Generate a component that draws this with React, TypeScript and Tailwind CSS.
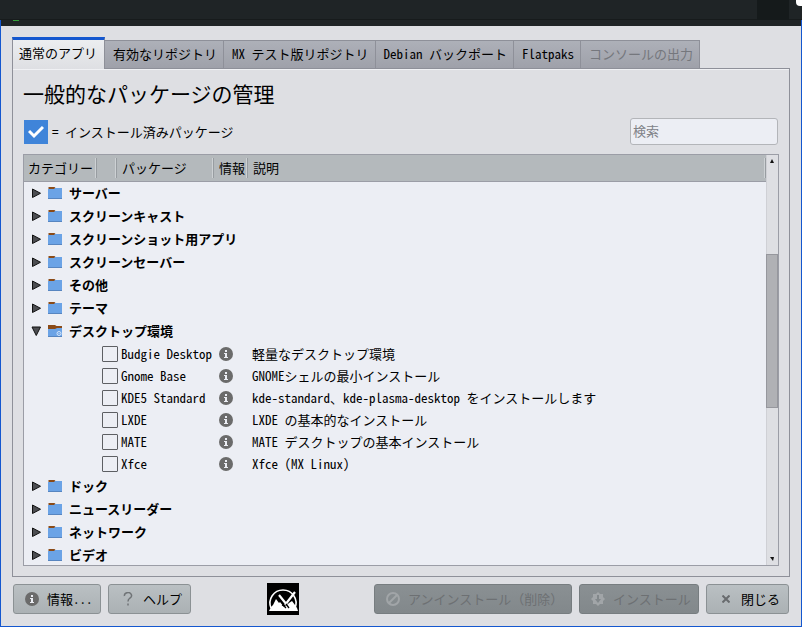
import clsx from 'clsx'

const tabs = [
  { label: '通常のアプリ', active: true },
  { label: '有効なリポジトリ' },
  { label: 'MX テスト版リポジトリ' },
  { label: 'Debian バックポート' },
  { label: 'Flatpaks' },
  { label: 'コンソールの出力', disabled: true },
]

const categories = [
  { name: 'サーバー' },
  { name: 'スクリーンキャスト' },
  { name: 'スクリーンショット用アプリ' },
  { name: 'スクリーンセーバー' },
  { name: 'その他' },
  { name: 'テーマ' },
  {
    name: 'デスクトップ環境',
    packages: [
      { name: 'Budgie Desktop', description: '軽量なデスクトップ環境' },
      { name: 'Gnome Base', description: 'GNOMEシェルの最小インストール' },
      { name: 'KDE5 Standard', description: 'kde-standard、kde-plasma-desktop をインストールします' },
      { name: 'LXDE', description: 'LXDE の基本的なインストール' },
      { name: 'MATE', description: 'MATE デスクトップの基本インストール' },
      { name: 'Xfce', description: 'Xfce (MX Linux)' },
    ],
  },
  { name: 'ドック' },
  { name: 'ニュースリーダー' },
  { name: 'ネットワーク' },
  { name: 'ビデオ' },
]

function InfoIcon({ className }: { className?: string }) {
  return (
    <svg viewBox="0 0 14 14" className={clsx('size-3.5 shrink-0', className)}>
      <circle cx="7" cy="7" r="7" fill="#6b6b6b" />
      <path d="M6 3h2v2H6zM5 6h3v4h1v1H5v-1h1V7H5z" fill="#eceef4" />
    </svg>
  )
}

function Arrow({ open }: { open: boolean }) {
  return (
    <svg viewBox="0 0 10 10" className="size-2.5 shrink-0">
      <path
        d={open ? 'M1 1h8.500L5.250 9.500z' : 'M1.500 1v8.500L9.500 5.250z'}
        fill="#4c4d51"
        stroke="#111"
        strokeLinejoin="round"
      />
    </svg>
  )
}

function FolderIcon({ open }: { open: boolean }) {
  return (
    <svg viewBox="0 0 14 12" className="h-3 w-3.5 shrink-0">
      <path d={open ? 'M0 0h7l1.5 1H14v4H0z' : 'M.5 0h6l1 1v3H.5z'} fill="#8a4a17" />
      <path d={open ? 'M0 4h7l2-1h5v9H0z' : 'M0 2h6l1-1h7v11H0z'} fill="#6ba3e6" />
      <path d="M0 11h14v1H0z" fill="#5785c0" />
      {open && <circle cx="11" cy="8.5" r="2" fill="none" stroke="#d5e5fa" />}
      {open && <circle cx="11" cy="8.5" r=".6" fill="#d5e5fa" />}
    </svg>
  )
}

function Logo() {
  return (
    <svg viewBox="0 0 32 32" className="size-8" role="img" aria-label="MX">
      <path d="M0 0h32v32H0z" fill="#000" />
      <path d="M4 25A13 13 0 1 1 28 25" fill="none" stroke="#fff" strokeWidth="1.6" />
      <path d="M2 28l2-4 2-2 3-6 3 4 1-1 4 5 2-1 3-3 3-2 3 4 2 3 1 3z" fill="#fff" />
      <path d="M12 12l8 10M28 9L18 22" fill="none" stroke="#fff" strokeWidth="2.2" />
      <path d="M15 22l2 1 2 2M19 21l3 4" fill="none" stroke="#000" strokeWidth="1.3" />
    </svg>
  )
}

function ColumnHeader({ label, first }: { label?: string; first?: boolean }) {
  return (
    <th className="h-[26px] p-0 py-0.5 font-normal">
      <div
        className={clsx(
          'flex h-5 items-center overflow-hidden border-r border-[#989da1] text-left whitespace-nowrap shadow-[inset_-1px_0_0_#cdd1d4]',
          first ? 'pl-1' : 'pl-[5px]'
        )}
      >
        {label}
      </div>
    </th>
  )
}

const buttonBase = 'flex h-[30px] items-center rounded-[3px] border text-[13px] whitespace-nowrap'
const buttonEnabled = 'border-[#8b9194] bg-linear-to-b from-[#bac0c3] to-[#abb1b4] text-black'
const buttonDisabled = 'border-[#777d80] bg-linear-to-b from-[#8a9093] to-[#82888b] text-[#6d7073]'

export default function App() {
  return (
    <div className="flex min-h-screen flex-col bg-[#1f2426] font-['Noto_Sans_CJK_JP',sans-serif] text-[13px] leading-5 text-black [font-feature-settings:'hwid']">
      <header className="flex h-5 justify-end border-b border-[#171b1c]">
        <div className="mr-[7px] h-5 w-8 bg-[#151a1b]" />
        <div className="h-1.5 w-1.5 rounded-bl-sm bg-white" />
      </header>

      <div className="flex flex-1 flex-col border-x border-b border-[#1457cf]">
        <div className="h-1.5 pl-3">
          <div className="h-px w-1.5 bg-[#35a03a]" />
        </div>

        <main className="flex flex-1 flex-col bg-[#dedfe3] px-[11px] pt-[11px] pb-[11px]">
          <div role="tablist" className="z-10 -mb-px flex items-end">
            {tabs.map((tab) => (
              <button
                key={tab.label}
                role="tab"
                aria-selected={!!tab.active}
                disabled={tab.disabled}
                className={clsx(
                  'border-r whitespace-nowrap',
                  tab.active
                    ? 'h-8 border-t-3 border-l border-[#8e9099] border-t-[#1457cf] bg-linear-to-b from-[#eceef0] to-[#dedfe3] pr-[7px] pb-1 pl-1.5'
                    : 'mb-px h-7 border-t border-[#8e9099] bg-linear-to-b from-[#adb0b8] to-[#9fa1aa] pr-1.5 pb-0.5 pl-2',
                  tab.disabled && 'text-[#75777d]'
                )}
              >
                {tab.label}
              </button>
            ))}
          </div>

          <section className="flex flex-1 flex-col border border-[#8e9099] px-2.5 pt-2 pb-2.5 shadow-[inset_0_1px_0_#f0f1f4]">
            <h1 className="h-8 text-[21px] leading-8">一般的なパッケージの管理</h1>

            <div className="mt-[9px] flex items-center justify-between px-px">
              <div className="flex items-center gap-1">
                <span className="flex size-6 items-center justify-center bg-[#3f84d9]">
                  <svg viewBox="0 0 16 16" className="size-4">
                    <path d="M1 7l5 5 9-9" fill="none" stroke="#fff" strokeWidth="3" />
                  </svg>
                </span>
                <span>= インストール済みパッケージ</span>
              </div>
              <input
                type="search"
                aria-label="検索"
                placeholder="検索"
                className="h-[27px] w-[148px] rounded-[3px] border border-[#b3b5b9] bg-[#eceef4] px-0.5 pb-0.5 placeholder:text-[#808287]"
              />
            </div>

            <div className="mt-[9px] flex h-80 grow border border-[#9b9da6] bg-[#eceef4]">
              <div className="min-w-0 flex-1 overflow-hidden">
                <table className="w-full table-fixed border-collapse">
                  <colgroup>
                    <col className="w-[73px]" />
                    <col className="w-5" />
                    <col className="w-[97px]" />
                    <col className="w-[34px]" />
                    <col />
                  </colgroup>
                  <thead className="border-b border-[#9b9da6] bg-[#b4b9bc]">
                    <tr>
                      <ColumnHeader label="カテゴリー" first />
                      <ColumnHeader />
                      <ColumnHeader label="パッケージ" />
                      <ColumnHeader label="情報" />
                      <ColumnHeader label="説明" />
                    </tr>
                  </thead>
                  {categories.map((category) => (
                    <tbody key={category.name}>
                      <tr className="h-[23px]">
                        <td colSpan={5} className="p-0">
                          <button aria-expanded={!!category.packages} className="flex h-[23px] items-center pl-[7px] font-bold">
                            <Arrow open={!!category.packages} />
                            <span className="ml-[7px] flex">
                              <FolderIcon open={!!category.packages} />
                            </span>
                            <span className="ml-[7px]">{category.name}</span>
                          </button>
                        </td>
                      </tr>
                      {category.packages?.map((pkg) => (
                        <tr key={pkg.name} className="h-[22px]">
                          <td className="p-0" />
                          <td className="p-0 pl-[5px]">
                            <input
                              id={pkg.name}
                              type="checkbox"
                              className="block size-4 appearance-none rounded-[1px] border border-[#5d5f63] checked:bg-[#3f84d9]"
                            />
                          </td>
                          <td className="p-0 pl-1 whitespace-nowrap">
                            <label htmlFor={pkg.name}>{pkg.name}</label>
                          </td>
                          <td className="p-0 pl-[5px]">
                            <InfoIcon />
                          </td>
                          <td className="p-0 pl-1 whitespace-nowrap">{pkg.description}</td>
                        </tr>
                      ))}
                    </tbody>
                  ))}
                </table>
              </div>

              {/* Scrollbar */}
              <div className="flex w-3 flex-col items-center bg-[#dedfe3] shadow-[inset_1px_0_0_#cfd0d5]">
                <svg viewBox="0 0 4 4" className="mt-1 size-1">
                  <path d="M2 0l2 4H0z" fill="#111" />
                </svg>
                <div className="mt-[91px] h-[154px] w-full border border-[#96979d] bg-[#b0b1b5]" />
                <svg viewBox="0 0 4 4" className="mt-auto mb-1 size-1">
                  <path d="M0 0h4L3 4z" fill="#111" />
                </svg>
              </div>
            </div>
          </section>

          <footer className="mt-1.5 flex items-center px-px">
            <button className={clsx(buttonBase, buttonEnabled, 'w-[88px] pl-[11px]')}>
              <InfoIcon />
              <span className="ml-2">情報...</span>
            </button>
            <button className={clsx(buttonBase, buttonEnabled, 'ml-[7px] w-[83px] pl-3')}>
              <svg viewBox="0 0 14 14" className="size-3.5">
                <path d="M3.5 4a3.500 3 0 1 1 5.500 2C7.500 7 7 7.500 7 9.500M7 11.500V13.500" fill="none" stroke="#707477" strokeWidth="1.500" />
              </svg>
              <span className="ml-2">ヘルプ</span>
            </button>
            <div className="flex flex-1 pl-[76px]">
              <Logo />
            </div>
            <button disabled className={clsx(buttonBase, buttonDisabled, 'w-[198px] pl-[11px] [font-feature-settings:normal]')}>
              <svg viewBox="0 0 14 14" className="size-3.5">
                <circle cx="7" cy="7" r="6" fill="none" stroke="#a1a5a8" strokeWidth="2" />
                <path d="M11 3l-8 8" stroke="#a1a5a8" strokeWidth="2" />
              </svg>
              <span className="ml-2">アンインストール（削除）</span>
            </button>
            <button disabled className={clsx(buttonBase, buttonDisabled, 'ml-[7px] w-[120px] pl-[11px]')}>
              <svg viewBox="0 0 14 14" className="size-3.5">
                <path d="M7 0l2 2h3v3l2 2-2 2v3H9l-2 2-2-2H2V9L0 7l2-2V2h3z" fill="#a1a5a8" />
                <path d="M6 3h2v4h2l-3 4-3-4h2z" fill="#82888b" />
              </svg>
              <span className="ml-2">インストール</span>
            </button>
            <button className={clsx(buttonBase, buttonEnabled, 'ml-[7px] w-[83px] pl-[15px]')}>
              <svg viewBox="0 0 8 8" className="size-2">
                <path d="M.5.5l7 7M7.500.5l-7 7" stroke="#686b6e" strokeWidth="2" />
              </svg>
              <span className="ml-[11px]">閉じる</span>
            </button>
          </footer>
        </main>
      </div>
    </div>
  )
}
